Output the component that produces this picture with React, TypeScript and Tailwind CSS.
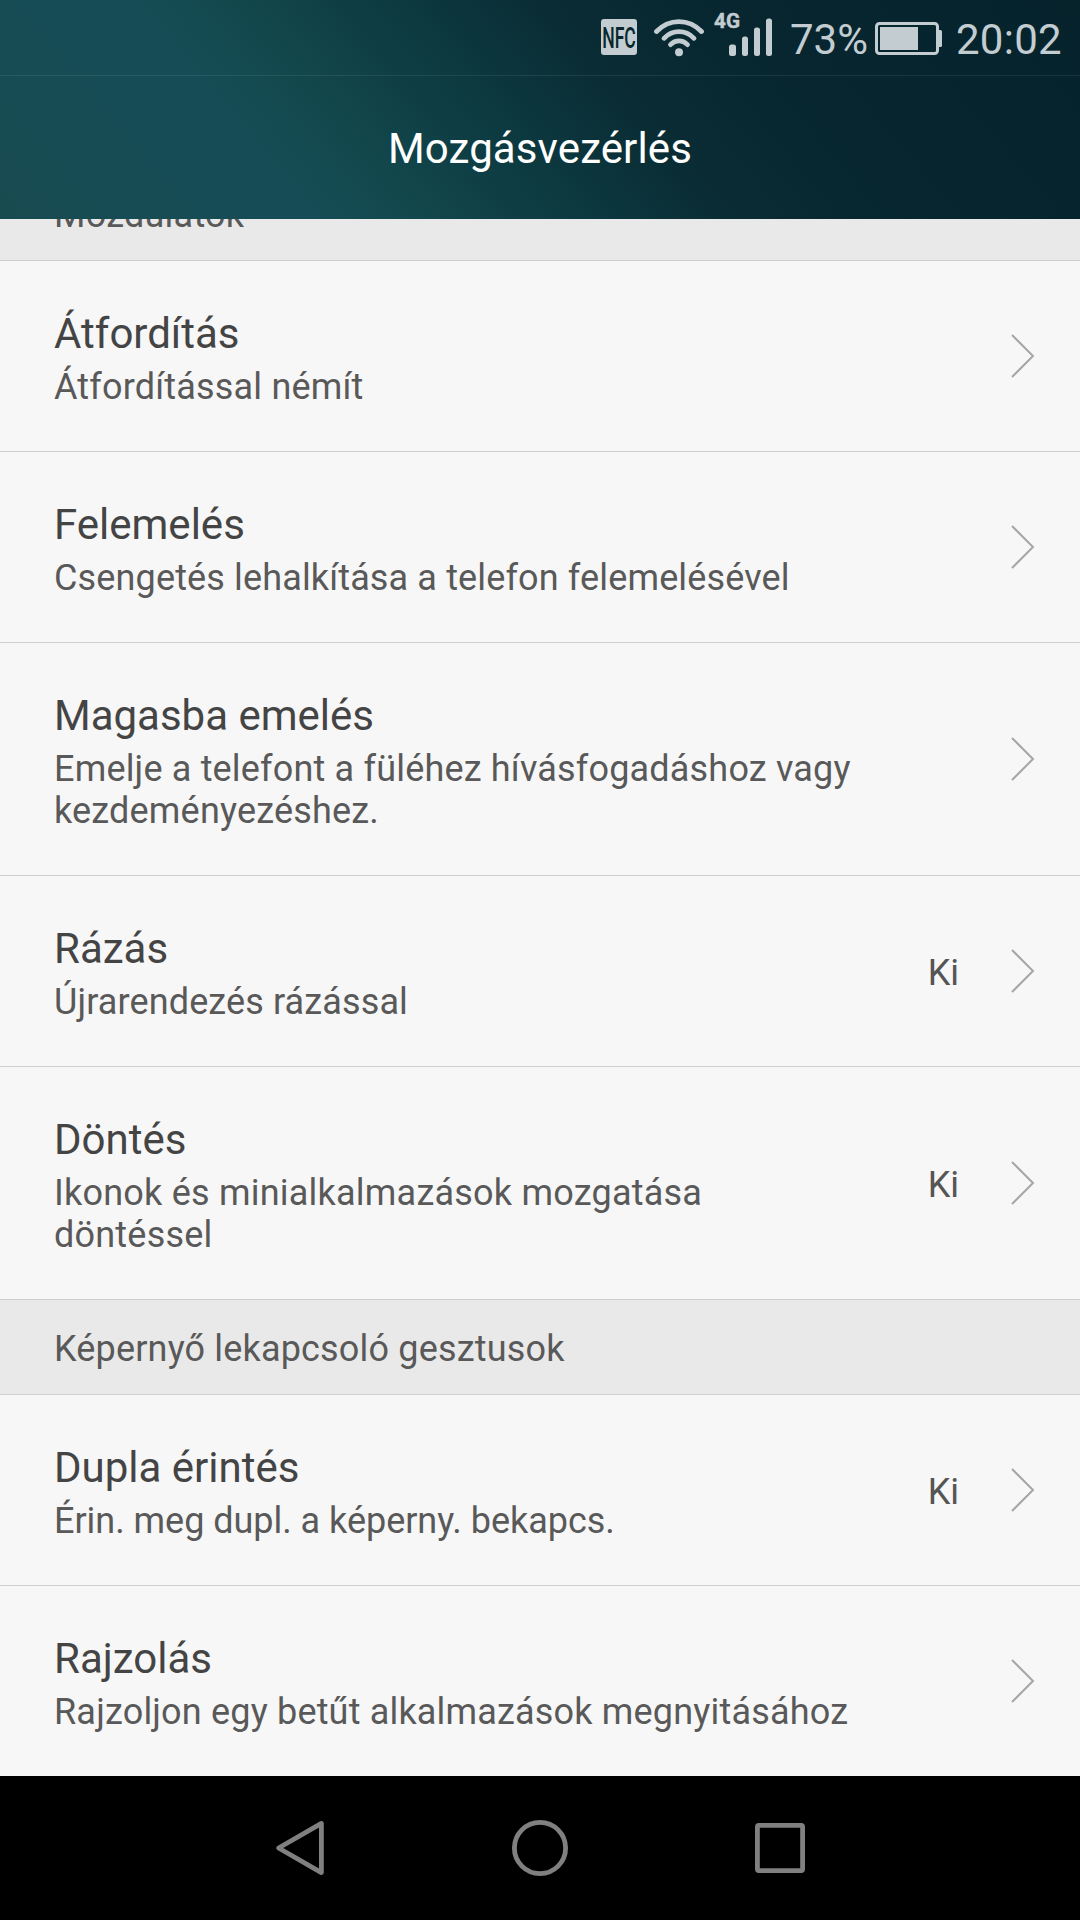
interface SettingRow {
  title: string;
  summary: string;
  value?: string;
  tracking?: string;
}

const motions: SettingRow[] = [
  { title: "Átfordítás", summary: "Átfordítással némít" },
  { title: "Felemelés", summary: "Csengetés lehalkítása a telefon felemelésével", tracking: "tracking-[0.14px]" },
  { title: "Magasba emelés", summary: "Emelje a telefont a füléhez hívásfogadáshoz vagy kezdeményezéshez." },
  { title: "Rázás", summary: "Újrarendezés rázással", value: "Ki", tracking: "tracking-[0.12px]" },
  { title: "Döntés", summary: "Ikonok és minialkalmazások mozgatása döntéssel", value: "Ki", tracking: "tracking-[0.22px]" },
];

const gestures: SettingRow[] = [
  { title: "Dupla érintés", summary: "Érin. meg dupl. a képerny. bekapcs.", value: "Ki", tracking: "tracking-[-0.03px]" },
  { title: "Rajzolás", summary: "Rajzoljon egy betűt alkalmazások megnyitásához" },
];

function WifiIcon() {
  return (
    <svg className="ml-[17px] h-[38px] w-[50px]" viewBox="0 0 50 38" fill="none" stroke="currentColor" strokeWidth="4.8" strokeLinecap="round">
      <path d="M2.5 12.5C15 -0.8 35 -0.8 47.5 12.5" />
      <path d="M10 19.3C18.5 10.4 31.5 10.4 40 19.3" />
      <path d="M16.5 25.6C21.5 20.6 28.5 20.6 33.5 25.6" />
      <circle cx="25" cy="33.3" r="4" fill="currentColor" stroke="none" />
    </svg>
  );
}

function SignalIcon() {
  return (
    <svg className="ml-[10px] h-[46px] w-[60px]" viewBox="0 0 60 46" fill="currentColor">
      <text x="0" y="17.7" fontSize="20" fontWeight="700" stroke="currentColor" strokeWidth="0.4" textLength="26" lengthAdjust="spacingAndGlyphs">4G</text>
      <rect x="15" y="34.5" width="7" height="11.5" rx="2.5" />
      <rect x="28" y="26.5" width="6" height="19.5" rx="2.5" />
      <rect x="40" y="17.5" width="6" height="28.5" rx="2.5" />
      <rect x="52" y="8.5" width="6" height="37.5" rx="2.5" />
    </svg>
  );
}

function BatteryIcon() {
  return (
    <svg className="ml-[7px] h-[33px] w-[67px]" viewBox="0 0 67 33" fill="currentColor">
      <rect x="1.5" y="1.5" width="61" height="30" rx="3" fill="none" stroke="currentColor" strokeWidth="3" />
      <rect x="5" y="5" width="38" height="23" />
      <path d="M64 8h1.5q1.5 0 1.5 1.5v14q0 1.5 -1.5 1.5H64z" />
    </svg>
  );
}

function Chevron() {
  return (
    <svg className="h-[46px] w-6 shrink-0" viewBox="0 0 24 46" fill="none" stroke="#a6a6a6" strokeWidth="2">
      <path d="M1 2L22 23L1 44" />
    </svg>
  );
}

function Row({ row, last }: { row: SettingRow; last?: boolean }) {
  return (
    <div className={`flex items-center pl-[54px] pr-[45px] ${last ? "" : "border-b border-[#cfcfcf]"}`}>
      <div className="flex-1 pt-12 pb-[43px]">
        <div className="text-[42px] leading-[49px] text-[#444444]">{row.title}</div>
        <div className={`mt-2 text-[36px] leading-[42px] text-[#595959] ${row.tracking ?? "tracking-[0.18px]"}`}>
          {/* rows with a value leave less room for the summary */}
          <div className={row.value ? "w-[720px]" : "w-[820px]"}>{row.summary}</div>
        </div>
      </div>
      {row.value && <span className="mr-[52px] pt-1 text-[36px] leading-[42px] text-[#555555]">{row.value}</span>}
      <Chevron />
    </div>
  );
}

export default function App() {
  return (
    <div className="flex h-[1920px] w-[1080px] flex-col overflow-hidden bg-[#f7f7f7] font-['Roboto',sans-serif]">
      <header className="h-[219px] shrink-0 bg-[linear-gradient(50deg,#184b50_0%,#174c55_12%,#154c55_25%,#13494e_32%,#0f4046_40%,#0c373e_48%,#0a2c34_58%,#07262f_72%,#06232c_100%)]">
        <div className="flex h-[75px] items-start justify-end pr-[18px] text-[#c3cdd1]">
          <svg className="mt-[19px] h-9 w-9" viewBox="0 0 36 36">
            <rect width="36" height="36" rx="3" fill="currentColor" />
            <text x="1.2" y="28.8" fontSize="30" fontWeight="500" fill="#08272f" textLength="33.6" lengthAdjust="spacingAndGlyphs">NFC</text>
          </svg>
          <div className="mt-[18.5px]"><WifiIcon /></div>
          <div className="mt-[10px]"><SignalIcon /></div>
          <span className="ml-[16px] mt-[15px] text-[42px] leading-[49px]">73%</span>
          <div className="mt-[22px]"><BatteryIcon /></div>
          <span className="ml-[14px] mt-[15px] text-[42px] leading-[49px] tracking-[0.3px]">20:02</span>
        </div>
        <div className="flex h-[144px] justify-center border-t border-white/8 pt-12">
          <h1 className="text-[42px] leading-[49px] tracking-[0.1px] text-white">Mozgásvezérlés</h1>
        </div>
      </header>

      <main className="flex-1">
        {/* first section title is scrolled half way under the header */}
        <div className="flex h-[42px] items-end overflow-hidden border-b border-[#cfcfcf] bg-[#e9e9e9] pb-6 pl-[54px] text-[36px] leading-[42px] tracking-[0.24px] text-[#595959]">
          Mozdulatok
        </div>
        {motions.map(row => (
          <Row key={row.title} row={row} />
        ))}
        <div className="h-[95px] border-b border-[#cfcfcf] bg-[#e9e9e9] pl-[54px] pt-[28px] text-[36px] leading-[42px] tracking-[0.17px] text-[#595959]">
          Képernyő lekapcsoló gesztusok
        </div>
        {gestures.map((row, i) => (
          <Row key={row.title} row={row} last={i === gestures.length - 1} />
        ))}
      </main>

      <nav className="flex h-[144px] shrink-0 items-center justify-center gap-[180px] bg-black">
        <svg className="h-[60px] w-[60px]" viewBox="0 0 60 60" fill="none" stroke="#808080" strokeWidth="4.8" strokeLinejoin="round">
          <path d="M8.6 30L51.4 5.4V54.6Z" />
        </svg>
        <svg className="h-[60px] w-[60px]" viewBox="0 0 60 60" fill="none" stroke="#808080" strokeWidth="4.8">
          <circle cx="30" cy="30" r="25.6" />
        </svg>
        <svg className="h-[60px] w-[60px]" viewBox="0 0 60 60" fill="none" stroke="#808080" strokeWidth="4.8">
          <rect x="7.4" y="7.4" width="45.2" height="45.2" rx="1.5" />
        </svg>
      </nav>
    </div>
  );
}
